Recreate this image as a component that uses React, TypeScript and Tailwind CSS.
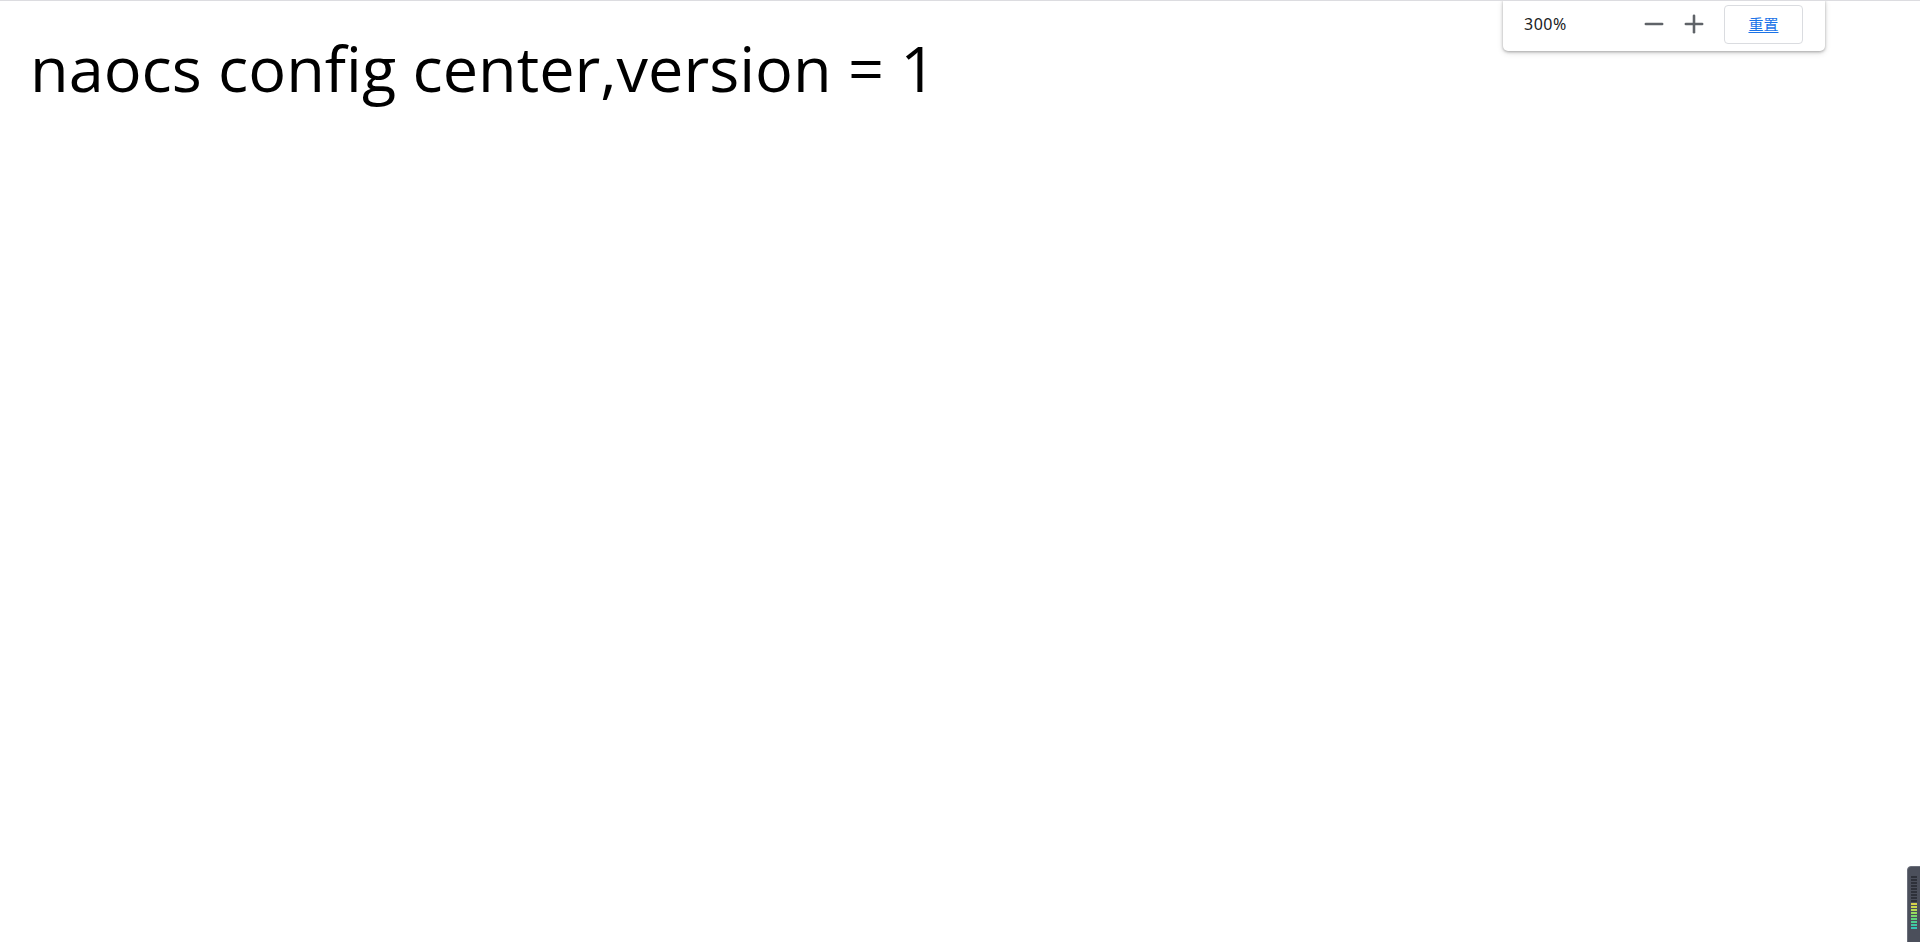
import { Minus, Plus } from "lucide-react";

const meterBars = [
  "bg-[#2e313a]", "bg-[#2e313a]", "bg-[#2e313a]", "bg-[#2e313a]", "bg-[#2e313a]",
  "bg-[#2e313a]", "bg-[#2e313a]", "bg-[#2e313a]", "bg-[#2e313a]",
  "bg-[#d6d24a]", "bg-[#c9d84c]", "bg-[#b4dc55]", "bg-[#98dc5e]", "bg-[#7ad86a]",
  "bg-[#5fd47c]", "bg-[#4cd090]", "bg-[#3fcaa4]", "bg-[#36c4b4]",
];

export default function App() {
  return (
    <div className="relative w-full h-[942px] bg-white border-t border-[#dcdce0] overflow-hidden font-['Open_Sans',sans-serif]">
      {/* Page content */}
      <h1 className="pl-[30px] pt-[27px] text-[63px] leading-[80px] text-black font-normal">
        naocs config center,version = 1
      </h1>

      {/* Browser zoom bubble */}
      <div className="absolute top-[-1px] left-[1503px] w-[322px] h-[51px] bg-white rounded-b-[5px] shadow-[0_1px_3px_rgba(0,0,0,0.3),0_2px_6px_rgba(0,0,0,0.12)] flex items-center pl-[21px] pr-[22px] pb-[3px]">
        <span className="text-[16px] tracking-[0.5px] text-[#202124] font-['Noto_Sans',sans-serif] flex-1">300%</span>
        <button className="w-[32px] h-[32px] flex items-center justify-center text-[#5f6368]">
          <Minus size={28} strokeWidth={2.2} />
        </button>
        <button className="w-[32px] h-[32px] ml-[8px] flex items-center justify-center text-[#5f6368] mr-[14px]">
          <Plus size={28} strokeWidth={2.2} />
        </button>
        <button className="w-[79px] h-[39px] rounded-[4px] border border-[#dadce0] bg-white flex items-center justify-center">
          <span className="text-[15px] text-[#1a73e8] underline underline-offset-2 font-['Noto_Sans_CJK_SC',sans-serif]">重置</span>
        </button>
      </div>

      {/* Level meter widget */}
      <div className="absolute left-[1907px] top-[865px] w-[14px] h-[78px] bg-[#4b4f5b] border border-[#6a6e7a] rounded-tl-[4px] flex flex-col items-center gap-[1px] pt-[9px]">
        {meterBars.map((c, i) => (
          <div key={i} className={`w-[6px] h-[2px] ${c}`} />
        ))}
      </div>
    </div>
  );
}
